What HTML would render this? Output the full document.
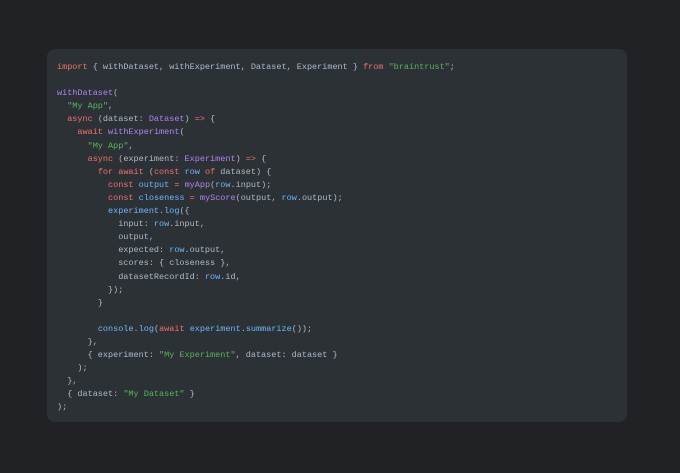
<!DOCTYPE html>
<html><head><style>
html,body{margin:0;padding:0;width:680px;height:473px;background:#202225;overflow:hidden}
.p{position:absolute;left:47px;top:49px;width:580px;height:373px;background:#2c3136;border-radius:8px}
pre{margin:0;position:absolute;left:10px;top:12px;font-family:"Liberation Mono",monospace;font-size:8.5px;line-height:13.1px;color:#adbac7}
.k{color:#f47067}.f{color:#b083f0}.v{color:#6cb6ff}.s{color:#57b55a}
</style></head><body><div class="p"><pre><span class="k">import</span> { withDataset, withExperiment, Dataset, Experiment } <span class="k">from</span> <span class="s">"braintrust"</span>;

<span class="f">withDataset</span>(
  <span class="s">"My App"</span>,
  <span class="k">async</span> (dataset: <span class="f">Dataset</span>) <span class="k">=&gt;</span> {
    <span class="k">await</span> <span class="f">withExperiment</span>(
      <span class="s">"My App"</span>,
      <span class="k">async</span> (experiment: <span class="f">Experiment</span>) <span class="k">=&gt;</span> {
        <span class="k">for await</span> (<span class="k">const</span> <span class="v">row</span> <span class="k">of</span> dataset) {
          <span class="k">const</span> <span class="v">output</span> <span class="k">=</span> <span class="f">myApp</span>(<span class="v">row</span>.input);
          <span class="k">const</span> <span class="v">closeness</span> <span class="k">=</span> <span class="f">myScore</span>(output, <span class="v">row</span>.output);
          <span class="v">experiment</span>.<span class="v">log</span>({
            input: <span class="v">row</span>.input,
            output,
            expected: <span class="v">row</span>.output,
            scores: { closeness },
            datasetRecordId: <span class="v">row</span>.id,
          });
        }

        <span class="v">console</span>.<span class="v">log</span>(<span class="k">await</span> <span class="v">experiment</span>.<span class="v">summarize</span>());
      },
      { experiment: <span class="s">"My Experiment"</span>, dataset: dataset }
    );
  },
  { dataset: <span class="s">"My Dataset"</span> }
);</pre></div></body></html>
